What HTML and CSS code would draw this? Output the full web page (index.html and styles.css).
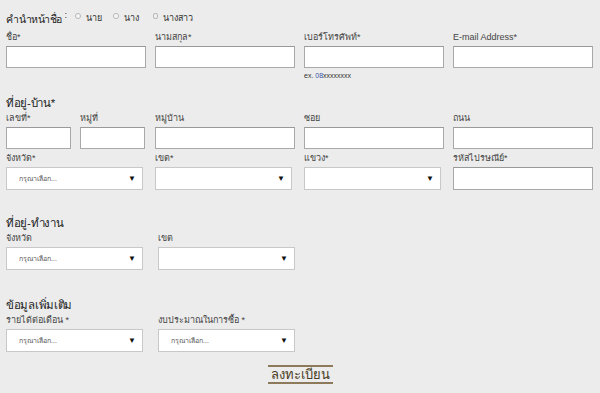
FILE: index.html
```html
<!DOCTYPE html>
<html lang="th">

<head>
    <meta charset="UTF-8">
    <meta name="viewport" content="width=device-width, initial-scale=1.0">
    <title>ลงทะเบียน</title>
    <link rel="stylesheet" href="styles.css">
</head>

<body>
    <form class="register">
        <div class="title-row">
            <span class="title">คำนำหน้าชื่อ</span>
            <span class="colon">:</span>
            <label class="radio r1"><input type="radio" name="prefix"> นาย</label>
            <label class="radio r2"><input type="radio" name="prefix"> นาง</label>
            <label class="radio"><input type="radio" name="prefix"> นางสาว</label>
        </div>

        <div class="row first">
            <div class="field">
                <label>ชื่อ*</label>
                <input type="text">
            </div>
            <div class="field">
                <label>นามสกุล*</label>
                <input type="text">
            </div>
            <div class="field">
                <label>เบอร์โทรศัพท์*</label>
                <input type="text">
                <span class="hint">ex. <b>08</b>xxxxxxxx</span>
            </div>
            <div class="field">
                <label>E-mail Address*</label>
                <input type="text">
            </div>
        </div>

        <h2 class="section home">ที่อยู่-บ้าน*</h2>
        <div class="row">
            <div class="field small">
                <label>เลขที่*</label>
                <input type="text">
            </div>
            <div class="field small">
                <label>หมู่ที่</label>
                <input type="text">
            </div>
            <div class="field wide">
                <label>หมู่บ้าน</label>
                <input type="text">
            </div>
            <div class="field">
                <label>ซอย</label>
                <input type="text">
            </div>
            <div class="field">
                <label>ถนน</label>
                <input type="text">
            </div>
        </div>
        <div class="row second">
            <div class="field">
                <label>จังหวัด*</label>
                <div class="select"><span>กรุณาเลือก...</span><i>▼</i></div>
            </div>
            <div class="field">
                <label>เขต*</label>
                <div class="select"><span></span><i>▼</i></div>
            </div>
            <div class="field">
                <label>แขวง*</label>
                <div class="select"><span></span><i>▼</i></div>
            </div>
            <div class="field">
                <label>รหัสไปรษณีย์*</label>
                <input type="text" class="tall">
            </div>
        </div>

        <h2 class="section work">ที่อยู่-ทำงาน</h2>
        <div class="row pair">
            <div class="field">
                <label>จังหวัด</label>
                <div class="select"><span>กรุณาเลือก...</span><i>▼</i></div>
            </div>
            <div class="field">
                <label>เขต</label>
                <div class="select"><span></span><i>▼</i></div>
            </div>
        </div>

        <h2 class="section extra">ข้อมูลเพิ่มเติม</h2>
        <div class="row pair">
            <div class="field">
                <label>รายได้ต่อเดือน *</label>
                <div class="select"><span>กรุณาเลือก...</span><i>▼</i></div>
            </div>
            <div class="field">
                <label>งบประมาณในการซื้อ *</label>
                <div class="select"><span>กรุณาเลือก...</span><i>▼</i></div>
            </div>
        </div>

        <div class="submit-row">
            <button type="button">ลงทะเบียน</button>
        </div>
    </form>
</body>

</html>
```

FILE: styles.css
```css
* {
    padding: 0;
    margin: 0;
    box-sizing: border-box;
    font-family: Tahoma, "Liberation Sans", "Noto Sans", sans-serif;
}

body {
    background-color: #ececec;
    color: #333;
    padding: 0 6px;
}

.title-row {
    display: flex;
    align-items: center;
    height: 18px;
    margin-top: 10px;
    font-size: 9px;
}

.title {
    white-space: nowrap;
    font-size: 10.5px;
    letter-spacing: -0.5px;
    color: #222;
}

.colon {
    width: 10px;
    margin-left: 3px;
    align-self: flex-start;
    font-size: 9px;
    line-height: 10px;
}

.radio {
    display: flex;
    align-items: center;
    gap: 5px;
    width: 40px;
    margin-top: -2px;
    color: #333;
}

.radio.r1 {
    width: 38px;
}

.radio input {
    appearance: none;
    width: 6px;
    height: 6px;
    border: 1px solid #b5b5b5;
    border-radius: 50%;
    background-color: #f8f8f8;
    margin-top: -5px;
}

.row {
    display: flex;
    gap: 9px;
}

.row.first {
    margin-top: 2px;
}

.row.second {
    margin-top: 2px;
}

.field {
    width: 140px;
    display: flex;
    flex-direction: column;
}

.field label {
    font-size: 9px;
    line-height: 14px;
    height: 14px;
    margin-bottom: 2px;
    color: #444;
}

.field input {
    width: 100%;
    height: 22px;
    border: 1px solid #a9a9a9;
    border-top-color: #999;
    background-color: #fff;
}

.field input.tall {
    height: 23px;
}

.field.small {
    width: 65px;
}

.field.wide {
    margin-left: 1px;
}

.hint {
    font-size: 7px;
    line-height: 9px;
    margin-top: 3px;
    color: #333;
}

.hint b {
    font-weight: normal;
    color: #3355aa;
}

.section {
    font-size: 11.5px;
    font-weight: normal;
    letter-spacing: -0.3px;
    color: #222;
    line-height: 16px;
}

.section.home {
    margin-top: 15px;
}

.section.work {
    margin-top: 25px;
}

.section.extra {
    margin-top: 27px;
}

.select {
    width: 137px;
    height: 23px;
    display: flex;
    justify-content: space-between;
    align-items: center;
    padding: 0 6px 0 12px;
    background-color: #fff;
    border: 1px solid #c8c8c8;
    font-size: 7px;
    color: #555;
}

.select i {
    font-style: normal;
    font-size: 8px;
    color: #111;
}

.pair {
    gap: 14px;
}

.pair .field {
    width: 138px;
}

.submit-row {
    display: flex;
    justify-content: center;
    margin-top: 13px;
}

button {
    width: 65px;
    border: none;
    border-top: 2px solid #8c7a5b;
    border-bottom: 2px solid #8c7a5b;
    background: none;
    color: #4a3c22;
    font-size: 13px;
    height: 19px;
    line-height: 15px;
    white-space: nowrap;
}
```
